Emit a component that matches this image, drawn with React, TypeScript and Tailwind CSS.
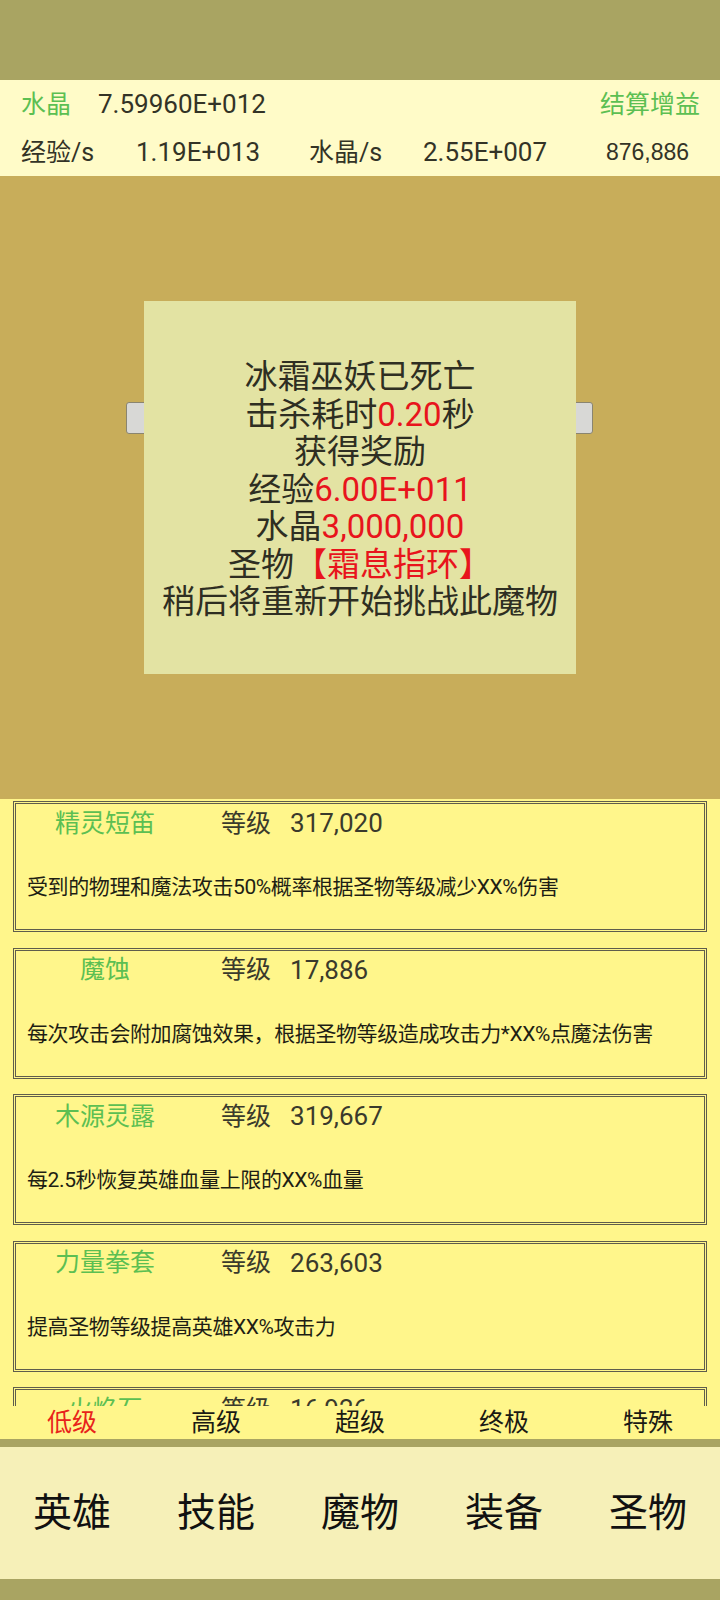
const relics = [
  { name: "精灵短笛", level: "317,020", desc: "受到的物理和魔法攻击50%概率根据圣物等级减少XX%伤害" },
  { name: "魔蚀", level: "17,886", desc: "每次攻击会附加腐蚀效果，根据圣物等级造成攻击力*XX%点魔法伤害" },
  { name: "木源灵露", level: "319,667", desc: "每2.5秒恢复英雄血量上限的XX%血量" },
  { name: "力量拳套", level: "263,603", desc: "提高圣物等级提高英雄XX%攻击力" },
  { name: "火焰石", level: "16,926", desc: "" },
];

const tiers = ["低级", "高级", "超级", "终极", "特殊"];
const navItems = ["英雄", "技能", "魔物", "装备", "圣物"];

const font = "font-['Roboto','Noto_Sans_CJK_SC',sans-serif]";

function RelicCard({ name, level, desc }: { name: string; level: string; desc: string }) {
  return (
    <div className="h-[131px] shrink-0 mx-[13px] border-[3px] border-double border-[#5f5d4c] bg-[#fff68b] flex flex-col">
      <div className="flex items-center h-[38px] pl-[14px] text-[25px] leading-none">
        <span className="w-[150px] text-center text-[#5cbf52]">{name}</span>
        <span className="ml-[41px] text-[#3a3a2c]">等级</span>
        <span className="ml-[19px] text-[26px] text-[#3a3a2c]">{level}</span>
      </div>
      <div className="mt-[35px] pl-[11px] text-[21px] leading-none text-[#1e1e14] tracking-[-0.4px]">{desc}</div>
    </div>
  );
}

export default function App() {
  return (
    <div className={`w-[720px] h-[1600px] flex flex-col ${font}`}>
      <div className="h-[80px] bg-[#a9a462]" />

      <div className="h-[96px] bg-[#fffbc8] text-[25px] leading-none text-[#333326]">
        <div className="h-[48px] flex items-center pl-[21px] pr-[20px]">
          <span className="w-[77px] text-[#5cbf52]">水晶</span>
          <span className="text-[26px]">7.59960E+012</span>
          <span className="ml-auto text-[#5cbf52]">结算增益</span>
        </div>
        <div className="h-[48px] flex items-center pl-[21px]">
          <span className="w-[115px]">经验/s</span>
          <span className="w-[173px] text-[26px]">1.19E+013</span>
          <span className="w-[114px]">水晶/s</span>
          <span className="w-[183px] text-[26px]">2.55E+007</span>
          <span className="text-[23px] font-['Liberation_Sans',sans-serif]">876,886</span>
        </div>
      </div>

      <div className="relative h-[623px] bg-[#c8ad5a]">
        <div className="pt-[226px] pl-[126px]">
          <div className="w-[467px] h-[32px] flex justify-between">
            <div className="w-[60px] h-[32px] rounded-[3px] border border-[#8a8570] bg-[#d8d8d6]" />
            <div className="w-[60px] h-[32px] rounded-[3px] border border-[#8a8570] bg-[#d8d8d6]" />
          </div>
        </div>
        <div className="absolute left-[144px] top-[125px] w-[432px] h-[373px] bg-[#e3e3a3] flex flex-col items-center justify-center pt-[4px] text-[33px] leading-[37.5px] text-[#2e2e22]">
          <div>冰霜巫妖已死亡</div>
          <div>
            击杀耗时<span className="text-[#e8141c]">0.20</span>秒
          </div>
          <div>获得奖励</div>
          <div>
            经验<span className="text-[#e8141c]">6.00E+011</span>
          </div>
          <div>
            水晶<span className="text-[#e8141c]">3,000,000</span>
          </div>
          <div>
            圣物<span className="text-[#e8141c]">【霜息指环】</span>
          </div>
          <div>稍后将重新开始挑战此魔物</div>
        </div>
      </div>

      <div className="h-[607px] bg-[#fff68b] overflow-hidden flex flex-col gap-[15.5px] pt-[2px]">
        {relics.map((r) => (
          <RelicCard key={r.name} {...r} />
        ))}
      </div>

      <div className="h-[33px] bg-[#fff68b] grid grid-cols-5 items-center text-[25px] leading-none text-[#1a1a14]">
        {tiers.map((t, i) => (
          <div key={t} className={`text-center ${i === 0 ? "text-[#e8231a]" : ""}`}>
            {t}
          </div>
        ))}
      </div>

      <div className="h-[8px] bg-[#a9a462]" />

      <div className="h-[132px] bg-[#f6f0b8] grid grid-cols-5 items-center text-[39px] leading-none text-[#111]">
        {navItems.map((n) => (
          <div key={n} className="text-center">
            {n}
          </div>
        ))}
      </div>

      <div className="h-[21px] bg-[#a9a462]" />
    </div>
  );
}
